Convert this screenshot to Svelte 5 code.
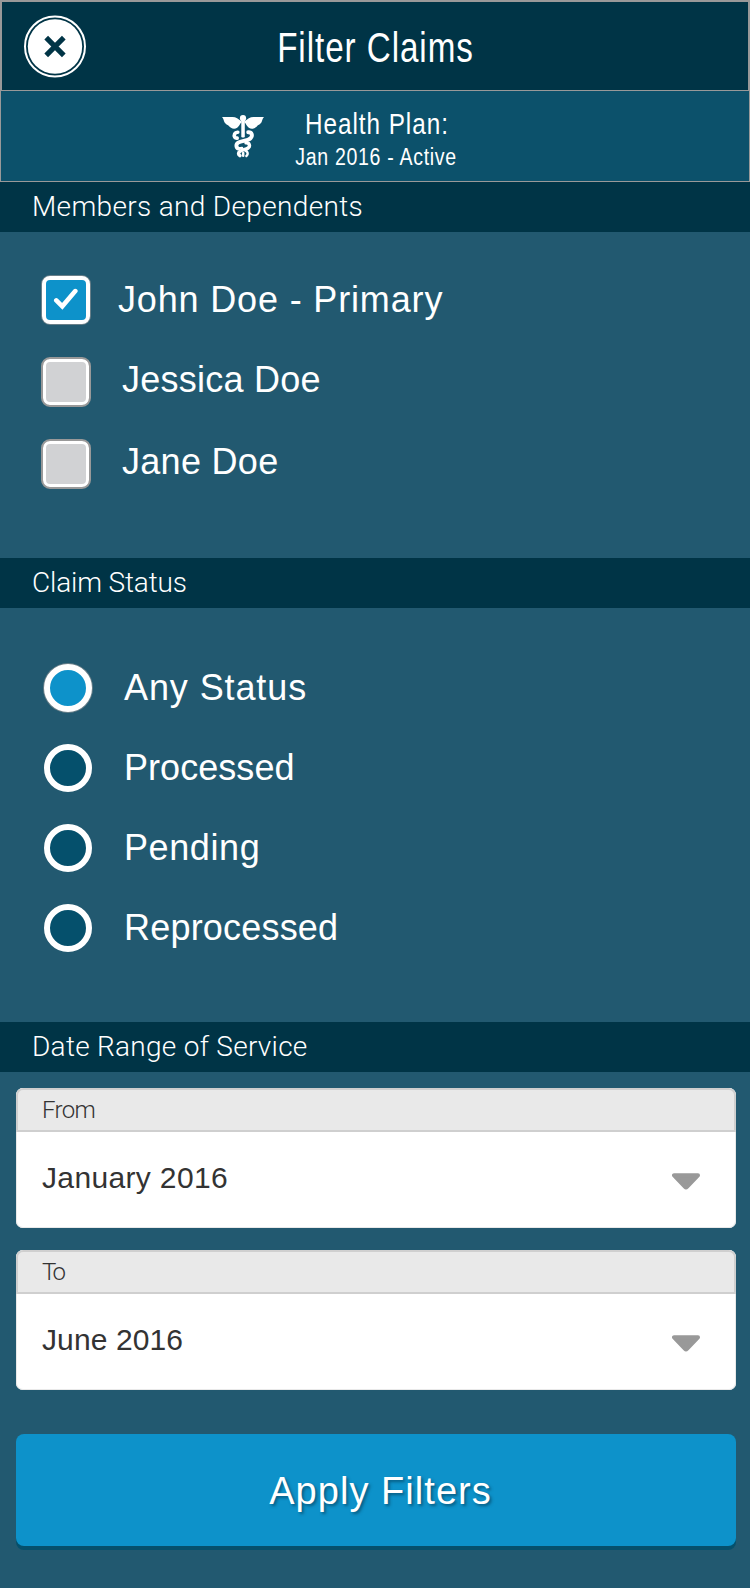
<script>
  const members = [
    { name: 'John Doe - Primary', checked: true, spacing: 0.84 },
    { name: 'Jessica Doe', checked: false, spacing: 0.25 },
    { name: 'Jane Doe', checked: false, spacing: 0.3 }
  ];

  const statuses = [
    { name: 'Any Status', selected: true, spacing: 0.9 },
    { name: 'Processed', selected: false, spacing: 0.05 },
    { name: 'Pending', selected: false, spacing: 0.6 },
    { name: 'Reprocessed', selected: false, spacing: 0.2 }
  ];

  const dates = [
    { label: 'From', labelSpacing: -0.7, value: 'January 2016', spacing: 0.35 },
    { label: 'To', labelSpacing: -2.6, value: 'June 2016', spacing: 0.1 }
  ];
</script>

<div class="screen">
  <header class="titlebar">
    <button class="close" aria-label="Close">
      <svg width="62" height="63" viewBox="0 0 62 63">
        <circle cx="31" cy="31.500" r="30" fill="none" stroke="#fff" stroke-width="2" />
        <circle cx="31" cy="31.500" r="27.200" fill="#fff" />
        <path d="M22.200 22.700L39.800 40.300M39.800 22.700L22.200 40.300" stroke="#003446" stroke-width="5.200" />
      </svg>
    </button>
    <h1><span>Filter Claims</span></h1>
  </header>

  <div class="plan">
    <svg class="caduceus" width="42" height="43" viewBox="0 0 42 43">
      <g fill="#fff">
        <circle cx="21" cy="3.2" r="3.1" />
        <rect x="19.3" y="4" width="3.5" height="18.5" rx="1.2" />
        <path d="M0 1.9H10.5C14 1.9 16.400 4 19.500 6.200V7.600C17.600 8.800 17.600 11 15.200 12.800C12 14.800 8.600 13.400 6.400 10.600C5.600 9.600 3.600 9.200 2.600 7.400C1.800 5.800 1.600 3.600 0 1.900Z" />
        <path d="M42 1.9H31.500C28 1.900 25.600 4 22.500 6.200V7.600C24.400 8.800 24.400 11 26.800 12.800C30 14.800 33.400 13.400 35.600 10.600C36.400 9.600 38.400 9.200 39.400 7.400C40.200 5.800 40.400 3.600 42 1.900Z" />
      </g>
      <g fill="none" stroke="#fff" stroke-linecap="round">
        <path stroke-width="3.600" d="M15.800 17.200C12.600 17 11.600 20.200 12.800 22.200C13.300 23 14 23.200 15.200 23.100" />
        <path stroke-width="3.900" d="M26.200 17.200C30 17 31 20.600 28.600 23.200C25.600 26 19.600 25.600 16.200 27.600C13.400 29.400 14.200 33 16.400 33.600" />
        <path stroke-width="3.400" d="M24 27.800C27.400 27.600 28.600 31 26.200 33C23.400 35 18.800 34.600 17 37.200C16.300 38.500 16.800 39.900 17.900 40.700" />
        <path stroke-width="2.500" d="M17 33.400L20 33M23.600 35.800C26 36.600 26.400 39.400 24.400 40.900M21.200 38V40.800" />
      </g>
    </svg>
    <div class="plan-text">
      <span class="plan-name">Health Plan:</span>
      <span class="plan-period">Jan 2016 - Active</span>
    </div>
  </div>

  <h2 class="members-title">Members and Dependents</h2>
  <section class="members">
    {#each members as m}
      <div class="row" class:unchecked={!m.checked}>
        <span class="box">
          {#if m.checked}
            <svg width="26" height="24" viewBox="0 0 26 24">
              <path d="M3.300 12.400L9.300 18.300L22.300 3.100" fill="none" stroke="#fff" stroke-width="4.600" stroke-linecap="round" />
            </svg>
          {/if}
        </span>
        <span class="label" style="letter-spacing: {m.spacing}px">{m.name}</span>
      </div>
    {/each}
  </section>

  <h2 class="status-title">Claim Status</h2>
  <section class="statuses">
    {#each statuses as s}
      <div class="row">
        <span class="radio" class:selected={s.selected}></span>
        <span class="label" style="letter-spacing: {s.spacing}px">{s.name}</span>
      </div>
    {/each}
  </section>

  <h2 class="range-title">Date Range of Service</h2>
  <section class="range">
    {#each dates as d}
      <div class="field">
        <div class="field-label" style="letter-spacing: {d.labelSpacing}px">{d.label}</div>
        <div class="field-value">
          <span style="letter-spacing: {d.spacing}px">{d.value}</span>
          <svg width="28" height="17" viewBox="0 0 28 17">
            <path d="M2 2.300H26L15 13.800Q14 14.800 13 13.800Z" fill="#999" stroke="#999" stroke-width="4" stroke-linejoin="round" />
          </svg>
        </div>
      </div>
    {/each}
    <button class="apply">Apply Filters</button>
  </section>
</div>

<style>
  :global(body) {
    margin: 0;
    background: #225970;
  }
  .screen {
    width: 750px;
    height: 1588px;
    overflow: hidden;
    display: flex;
    flex-direction: column;
    background: #225970;
    color: #fff;
    font-family: "Liberation Sans", Arial, sans-serif;
  }
  button {
    border: 0;
    padding: 0;
    background: none;
    font-family: inherit;
    color: inherit;
  }
  .titlebar {
    box-sizing: border-box;
    height: 91px;
    border: 2px solid #999;
    border-bottom-width: 1px;
    background: #003446;
    display: grid;
    grid-template-columns: 84px 1fr 84px;
    align-items: start;
  }
  .close {
    width: 62px;
    height: 63px;
    margin: 13px 0 0 22px;
  }
  .close svg {
    display: block;
  }
  h1 {
    margin: 0;
    font-size: 42px;
    font-weight: 400;
    line-height: 91px;
    text-align: center;
    white-space: nowrap;
  }
  h1 span {
    display: inline-block;
    letter-spacing: 1.200px;
    transform: scaleX(0.790);
  }
  .plan {
    box-sizing: border-box;
    height: 91px;
    border: 1px solid #999;
    border-top: 0;
    background: #0c516b;
    display: flex;
    align-items: flex-start;
  }
  .caduceus {
    margin: 24px 0 0 221px;
    flex: none;
  }
  .plan-text {
    width: 225px;
    display: flex;
    flex-direction: column;
    align-items: center;
    padding-top: 16px;
    white-space: nowrap;
  }
  .plan-name {
    font-size: 30px;
    line-height: 34px;
    letter-spacing: 1.200px;
    transform: scaleX(0.810);
  }
  .plan-period {
    font-size: 23px;
    line-height: 32px;
    letter-spacing: 0.800px;
    transform: scaleX(0.850);
  }
  h2 {
    margin: 0;
    height: 50px;
    padding-left: 32px;
    background: #003446;
    font-family: Roboto, "Liberation Sans", sans-serif;
    font-size: 28px;
    font-weight: 300;
    line-height: 49px;
    white-space: nowrap;
  }
  .members-title {
    letter-spacing: 0.340px;
  }
  .status-title {
    letter-spacing: -0.150px;
  }
  .range-title {
    letter-spacing: 0.270px;
  }
  .members,
  .statuses {
    box-sizing: border-box;
    display: flex;
    flex-direction: column;
    gap: 32px;
  }
  .members {
    height: 326px;
    padding: 43px 0 0 41px;
  }
  .statuses {
    height: 414px;
    padding: 56px 0 0 44px;
  }
  .row {
    display: flex;
    align-items: center;
  }
  .label {
    font-size: 36px;
    line-height: 48px;
    white-space: nowrap;
  }
  .members .label {
    margin-left: 27px;
  }
  .members .unchecked .label {
    margin-left: 31px;
    padding-bottom: 5px;
    line-height: 45px;
  }
  .statuses .label {
    margin-left: 32px;
  }
  .box {
    box-sizing: border-box;
    width: 50px;
    height: 50px;
    border: 2px solid #999;
    border-radius: 9px;
    background: #d1d2d4;
    box-shadow: inset 0 0 0 3px #fff;
    display: flex;
    align-items: center;
    justify-content: center;
  }
  .row:not(.unchecked) .box {
    width: 48px;
    height: 48px;
    margin: 1px;
    border: 4px solid #fff;
    border-radius: 8px;
    background: #0d92ca;
    box-shadow: 0 0 0 1px rgba(153, 153, 153, 0.600);
  }
  .radio {
    box-sizing: border-box;
    width: 48px;
    height: 48px;
    border: 6px solid #fff;
    border-radius: 50%;
    background: #05506c;
  }
  .radio.selected {
    background: #0d92ca;
    box-shadow: 0 0 0 1px rgba(153, 153, 153, 0.600);
  }
  .range {
    display: flex;
    flex-direction: column;
    gap: 22px;
    padding: 16px 14px 0 16px;
  }
  .field {
    box-sizing: border-box;
    height: 140px;
    border-radius: 7px;
    background: #fff;
    box-shadow: inset 0 0 0 1px #e9e9e9;
    color: #333;
    overflow: hidden;
  }
  .field-label {
    box-sizing: border-box;
    height: 44px;
    border: 2px solid #cfcfcf;
    border-radius: 7px 7px 0 0;
    background: #e9e9e9;
    padding-left: 24px;
    font-family: Roboto, "Liberation Sans", sans-serif;
    font-size: 24px;
    font-weight: 300;
    line-height: 40px;
  }
  .field-value {
    height: 96px;
    display: flex;
    justify-content: space-between;
    padding: 0 36px 0 26px;
    font-size: 30px;
  }
  .field-value span {
    line-height: 92px;
  }
  .field-value svg {
    margin-top: 41px;
  }
  .apply {
    height: 112px;
    margin-top: 22px;
    border-radius: 8px;
    background: #0d92ca;
    box-shadow: 0 4px 0 #05506c;
    font-size: 38px;
    line-height: 110px;
    letter-spacing: 1.050px;
    padding: 2px 0 0 9px;
    text-shadow: 2px 2px 3px rgba(0, 40, 60, 0.500);
  }
</style>
